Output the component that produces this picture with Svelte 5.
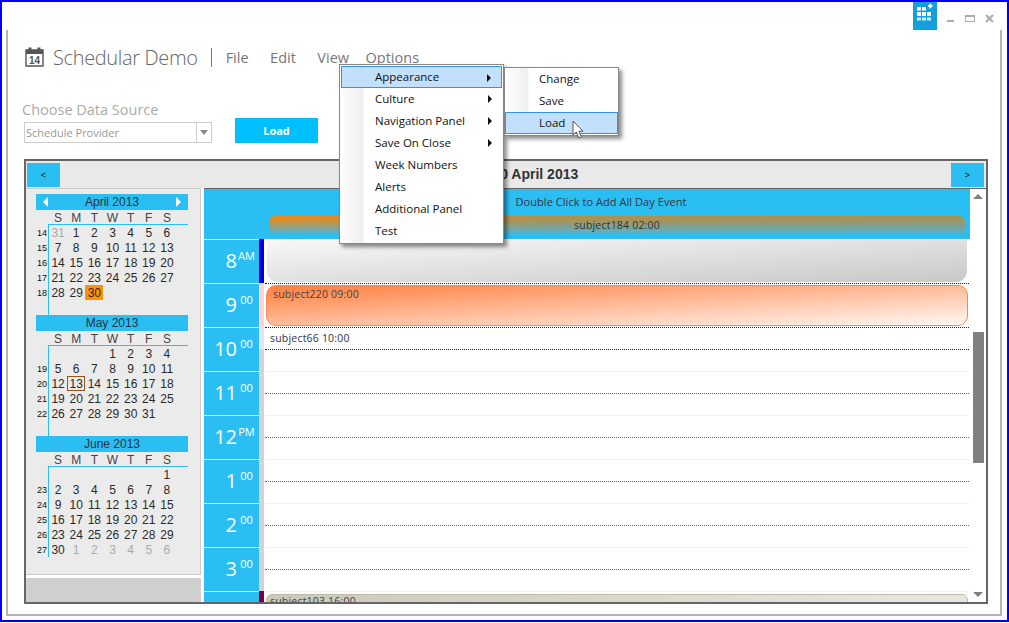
<script>
  const dayNames = ["S", "M", "T", "W", "T", "F", "S"];

  // one calendar month: leading blanks or muted days, then the month, then muted days
  function buildWeeks(lead, total, trail, firstWeek) {
    const cells = [...lead.map((d) => ({ d, muted: d !== "" })), ...Array.from({ length: total }, (_, i) => ({ d: i + 1, muted: false }))];
    for (let i = 1; i <= trail; i++) cells.push({ d: i, muted: true });
    const weeks = [];
    let week = firstWeek;
    for (let i = 0; i < 42; i += 7) {
      const days = cells.slice(i, i + 7);
      const full = days.length > 0 && days[0].d !== "";
      weeks.push({ num: full ? week++ : "", days });
    }
    return weeks;
  }

  const months = [
    { title: "April 2013", nav: true, weeks: buildWeeks([31], 30, 0, 14) },
    { title: "May 2013", nav: false, weeks: buildWeeks(["", "", ""], 31, 0, 19) },
    { title: "June 2013", nav: false, weeks: buildWeeks(["", "", "", "", "", ""], 30, 6, 23) },
  ];

  const hours = [
    { h: "8", s: "AM" },
    { h: "9", s: "00" },
    { h: "10", s: "00" },
    { h: "11", s: "00" },
    { h: "12", s: "PM" },
    { h: "1", s: "00" },
    { h: "2", s: "00" },
    { h: "3", s: "00" },
    { h: "", s: "" },
  ];

  const menuItems = [
    { label: "Appearance", sub: true, active: true },
    { label: "Culture", sub: true },
    { label: "Navigation Panel", sub: true },
    { label: "Save On Close", sub: true },
    { label: "Week Numbers" },
    { label: "Alerts" },
    { label: "Additional Panel" },
    { label: "Test" },
  ];
  const subItems = [{ label: "Change" }, { label: "Save" }, { label: "Load", active: true }];
</script>

<div class="window">
  <div class="caption">
    <div class="tile">
      <svg width="24" height="28" viewBox="0 0 24 28">
        <g fill="#fff">
          <rect x="4" y="5" width="4" height="3.5" /><rect x="9" y="5" width="4" height="3.5" />
          <rect x="4" y="10" width="4" height="4" /><rect x="9" y="10" width="4" height="4" /><rect x="14" y="10" width="4" height="4" />
          <rect x="4" y="15.5" width="4" height="3" opacity="0.8" /><rect x="9" y="15.5" width="4" height="3" opacity="0.8" /><rect x="14" y="15.5" width="4" height="3" opacity="0.8" />
          <path d="M15 3h1.5V1l3.5 3-3.500 3V5H15z" />
        </g>
      </svg>
    </div>
    <div class="min"></div>
    <div class="max"></div>
    <svg class="close" width="9" height="9" viewBox="0 0 9 9"><path d="M1 1l7 7M8 1l-7 7" stroke="#aaa" stroke-width="2" /></svg>
  </div>

  <div class="frame">
    <div class="topbar">
      <svg class="cal-icon" width="19" height="20" viewBox="0 0 19 20">
        <path d="M1 3h17v16H1z" fill="#fff" stroke="#555" stroke-width="1.4" />
        <rect x="1" y="3" width="17" height="4" fill="#555" />
        <rect x="3.500" y="0.5" width="3" height="4.500" fill="#555" />
        <rect x="12.500" y="0.5" width="3" height="4.500" fill="#555" />
        <text x="9.500" y="17" text-anchor="middle" class="cal-num">14</text>
      </svg>
      <span class="title">Schedular Demo</span>
      <span class="sep"></span>
      <nav class="menu">
        <span>File</span>
        <span>Edit</span>
        <span>View</span>
        <span class="options">Options</span>
      </nav>
    </div>

    <div class="source">
      <div>
        <div class="source-label">Choose Data Source</div>
        <div class="combo">
          <span class="combo-text">Schedule Provider</span>
          <span class="combo-btn"><i></i></span>
        </div>
      </div>
      <button class="load">Load</button>
    </div>

    <div class="scheduler">
      <div class="sch-head">
        <button class="nav">&lt;</button>
        <strong>Tuesday 30 April 2013</strong>
        <button class="nav">&gt;</button>
      </div>
      <div class="sch-body">
        <aside class="side">
          <div class="cals">
            {#each months as m}
              <section class="cal">
                <div class="cal-title">
                  {#if m.nav}<i class="tri-l"></i>{/if}
                  <span>{m.title}</span>
                  {#if m.nav}<i class="tri-r"></i>{/if}
                </div>
                <div class="cal-names">
                  {#each dayNames as n}<span>{n}</span>{/each}
                </div>
                <div class="cal-grid">
                  {#each m.weeks as w}
                    <div class="cal-row">
                      <span class="wk">{w.num}</span>
                      <div class="cal-days">
                        {#each w.days as c}
                          <span
                            class="day"
                            class:muted={c.muted}
                            class:sel={m.title === "April 2013" && c.d === 30}
                            class:today={m.title === "May 2013" && c.d === 13}>{c.d}</span>
                        {/each}
                      </div>
                    </div>
                  {/each}
                </div>
              </section>
            {/each}
          </div>
          <div class="side-foot"></div>
        </aside>

        <div class="main">
          <div class="content">
            <div class="allday">
              <div class="allday-hint">Double Click to Add All Day Event</div>
              <div class="allday-ev">subject184 02:00</div>
            </div>
            <div class="grid">
              <div class="times">
                {#each hours as t}
                  <div class="time"><span class="big">{t.h}</span><span class="small">{t.s}</span></div>
                {/each}
              </div>
              <div class="strip">
                <div class="st st-blue"></div>
                <div class="st st-pink"></div>
                <div class="st st-lav"></div>
                <div class="st st-grey"></div>
                <div class="st st-maroon"></div>
              </div>
              <div class="day-col">
                <div class="hour dark">
                  <div class="ev ev-grey"></div>
                </div>
                <div class="hour dark">
                  <div class="ev ev-orange">subject220 09:00</div>
                </div>
                <div class="hour">
                  <div class="half dark">subject66 10:00</div>
                  <div class="half2"></div>
                </div>
                {#each [11, 12, 1, 2, 3] as h (h)}
                  <div class="hour">
                    <div class="half"></div>
                    <div class="half2"></div>
                  </div>
                {/each}
                <div class="hour">
                  <div class="ev ev-olive">subject103 16:00</div>
                </div>
              </div>
            </div>
          </div>
          <div class="scroll">
            <i class="up"></i>
            <div class="thumb"></div>
            <i class="down"></i>
          </div>
        </div>
      </div>
    </div>
  </div>

  <div class="popup">
    {#each menuItems as it}
      <div class="mi" class:active={it.active}>
        <span>{it.label}</span>
        {#if it.sub}<i class="arrow"></i>{/if}
      </div>
    {/each}
  </div>
  <div class="popup sub">
    {#each subItems as it}
      <div class="mi" class:active={it.active}><span>{it.label}</span></div>
    {/each}
  </div>
  <svg class="cursor" width="13" height="20" viewBox="0 0 13 20">
    <path d="M1 1v14l3.400-3 2.400 6 2.600-1.100-2.500-5.700H11z" fill="#fff" stroke="#555" stroke-width="1" />
  </svg>
</div>

<style>
  :global(body) {
    margin: 0;
    background: #fff;
    overflow: hidden;
  }
  .window {
    box-sizing: border-box;
    position: relative;
    width: 1009px;
    height: 622px;
    border: 2px solid #0000f0;
    background: #fff;
    font-family: "Open Sans", "Liberation Sans", sans-serif;
    overflow: hidden;
  }

  .caption {
    display: flex;
    align-items: flex-start;
    height: 28px;
    padding-left: 911px;
  }
  .tile {
    width: 24px;
    height: 28px;
    background: #12a0dc;
  }
  .min {
    width: 7px;
    height: 2px;
    background: #aaa;
    margin: 18px 0 0 10px;
  }
  .max {
    box-sizing: border-box;
    width: 10px;
    height: 7px;
    border: 1px solid #aaa;
    border-top-width: 2px;
    margin: 13px 0 0 11px;
  }
  .close {
    margin: 12px 0 0 10px;
  }

  .frame {
    box-sizing: border-box;
    width: 996px;
    height: 586px;
    margin-left: 4px;
    border: solid #b4b4b4;
    border-width: 0 2px 2px 2px;
  }
  .topbar {
    display: flex;
    align-items: center;
    height: 26px;
    padding: 14px 0 0 17px;
  }
  .cal-icon {
    flex: none;
  }
  .cal-num {
    font: bold 10px "Liberation Sans", sans-serif;
    fill: #555;
  }
  .title {
    font-size: 20px;
    font-weight: 300;
    letter-spacing: -0.35px;
    color: #666;
    margin-left: 9px;
    white-space: nowrap;
  }
  .sep {
    width: 1px;
    height: 19px;
    background: #777;
    margin-left: 13px;
  }
  .menu {
    display: flex;
    gap: 21.500px;
    margin-left: 14px;
    font-size: 14.500px;
    color: #777;
  }
  .options {
    margin-left: -5px;
  }

  .source {
    display: flex;
    align-items: flex-end;
    gap: 23px;
    margin: 30px 0 0 14px;
  }
  .source-label {
    font-size: 14.500px;
    line-height: 20px;
    color: #aaa;
    white-space: nowrap;
  }
  .combo {
    box-sizing: border-box;
    display: flex;
    justify-content: space-between;
    align-items: stretch;
    width: 188px;
    height: 21px;
    margin: 2px 0 0 2px;
    border: 1px solid #ccc;
  }
  .combo-text {
    padding-left: 1px;
    font-size: 11px;
    line-height: 19px;
    color: #999;
  }
  .combo-btn {
    display: flex;
    align-items: center;
    justify-content: center;
    width: 14px;
    border-left: 1px solid #ccc;
  }
  .combo-btn i {
    border: 4px solid transparent;
    border-top: 5px solid #888;
    border-bottom: 0;
  }
  .load {
    width: 83px;
    height: 25px;
    border: 0;
    padding: 0;
    background: #00bfff;
    color: #fff;
    font: bold 11px "Open Sans", sans-serif;
  }

  .scheduler {
    box-sizing: border-box;
    width: 964px;
    height: 445px;
    margin: 16px 0 0 16px;
    border: 2px solid #666;
    overflow: hidden;
  }
  .sch-head {
    display: flex;
    align-items: center;
    justify-content: space-between;
    height: 27px;
    padding: 0 2px 0 1px;
    background: #e9e9e9;
  }
  .sch-head strong {
    font: bold 14px "Liberation Sans", sans-serif;
    color: #333;
    margin-bottom: 2px;
  }
  .nav {
    width: 33px;
    height: 24px;
    border: 0;
    padding: 0;
    background: #2bbef2;
    color: #111;
    font: 9px "Liberation Sans", sans-serif;
  }
  .sch-body {
    display: flex;
    height: 414px;
    gap: 3px;
  }

  .side {
    display: flex;
    flex-direction: column;
    gap: 3px;
    width: 176px;
    margin-left: -1px;
    flex: none;
  }
  .cals {
    box-sizing: border-box;
    height: 387px;
    padding: 5px 0 0 10px;
    background: #ebebeb;
    border: 1px solid #ccc;
  }
  .side-foot {
    flex: 1;
    background: #cfcfcf;
  }
  .cal {
    width: 152px;
    height: 121px;
    display: flex;
    flex-direction: column;
    color: #2a2a2a;
    font: 12px "Liberation Sans", sans-serif;
  }
  .cal-title {
    display: flex;
    align-items: center;
    justify-content: center;
    position: relative;
    flex: none;
    height: 16px;
    background: #2bbef2;
    color: #234;
  }
  .tri-l,
  .tri-r {
    position: absolute;
    top: 3px;
    border: 5px solid transparent;
  }
  .tri-l {
    left: 7px;
    border-left: 0;
    border-right: 5px solid #fff;
  }
  .tri-r {
    right: 7px;
    border-right: 0;
    border-left: 5px solid #fff;
  }
  .cal-names {
    display: grid;
    grid-template-columns: repeat(7, 18.150px);
    flex: none;
    height: 14px;
    line-height: 16px;
    padding-left: 13px;
    text-align: center;
    color: #444;
  }
  .cal-grid {
    margin-left: 12px;
    flex: 1;
    border-left: 1px solid #2bbef2;
    border-top: 1px solid #2bbef2;
  }
  .cal-row {
    display: flex;
    height: 15px;
    line-height: 16px;
    margin-left: -13px;
  }
  .wk {
    width: 13px;
    flex: none;
    text-align: center;
    font-size: 9px;
    color: #111;
    padding-right: 1px;
    box-sizing: border-box;
  }
  .cal-days {
    display: grid;
    grid-template-columns: repeat(7, 18.150px);
    text-align: center;
  }
  .day {
    box-sizing: border-box;
    height: 15px;
  }
  .muted {
    color: #aaa;
  }
  .sel {
    background: #ff9000;
  }
  .today {
    border: 1px solid #a0501a;
    line-height: 14px;
  }

  .main {
    display: flex;
    flex: 1;
    min-width: 0;
    border-top: 1px solid #666;
  }
  .content {
    width: 766px;
    flex: none;
  }
  .allday {
    box-sizing: border-box;
    height: 50px;
    background: #2bbef2;
    padding-left: 65px;
  }
  .allday-hint {
    height: 27px;
    line-height: 26px;
    text-align: center;
    padding-right: 37px;
    font-size: 11px;
    letter-spacing: 0.05px;
    color: #334;
  }
  .allday-ev {
    width: 696px;
    height: 17px;
    line-height: 18px;
    border-radius: 6px 6px 0 0;
    text-align: center;
    font-size: 10.500px;
    letter-spacing: 0.2px;
    color: #333;
    background: linear-gradient(to bottom, rgba(85, 178, 204, 0) 20%, #55b2cc),
      linear-gradient(to right, #e88a1e, #b09050 40%, #a0935a);
  }
  .grid {
    display: flex;
    height: 364px;
    overflow: hidden;
  }
  .times {
    width: 55px;
    flex: none;
    background: #2bbef2;
    color: #fff;
  }
  .time {
    box-sizing: border-box;
    display: flex;
    justify-content: flex-end;
    align-items: flex-start;
    height: 44px;
    padding-right: 4px;
    border-top: 1px solid #e6f7fd;
  }
  .big {
    font-size: 20px;
    line-height: 42px;
  }
  .small {
    min-width: 17px;
    margin-left: 1px;
    text-align: center;
    font-size: 11px;
    line-height: 32px;
  }
  .strip {
    display: flex;
    flex-direction: column;
    width: 5px;
    flex: none;
  }
  .st {
    flex: none;
  }
  .st-blue {
    height: 44px;
    background: #0000e0;
  }
  .st-pink {
    height: 44px;
    background: #ffd3d3;
  }
  .st-lav {
    height: 22px;
    background: #dfe4f8;
  }
  .st-grey {
    height: 242px;
    background: #d3d3d3;
  }
  .st-maroon {
    height: 13px;
    background: #7a0040;
  }
  .day-col {
    flex: 1;
    min-width: 0;
    border-top: 1px solid #f4f4f4;
    margin-left: 1px;
    padding-right: 1px;
  }
  .hour {
    box-sizing: border-box;
    display: flow-root;
    height: 44px;
  }
  .hour.dark {
    border-bottom: 1px dotted #222;
  }
  .half {
    box-sizing: border-box;
    height: 22px;
    border-bottom: 1px dotted #666;
  }
  .half.dark {
    border-bottom-color: #222;
    padding-left: 5px;
    font-size: 10.500px;
    letter-spacing: 0.2px;
    line-height: 20px;
    color: #334;
  }
  .half2 {
    box-sizing: border-box;
    height: 22px;
    border-bottom: 1px solid #f2f2f2;
  }
  .ev {
    box-sizing: border-box;
    margin: 0 1px;
    font-size: 10.500px;
    letter-spacing: 0.2px;
    line-height: 16px;
    padding-left: 6px;
    color: #444;
  }
  .ev-grey {
    height: 43px;
    background: #ccc linear-gradient(to bottom right, #f8f8f8, #c8c8c8);
    border: 1px solid #fff;
    border-top: 0;
    border-radius: 0 0 12px 12px;
  }
  .ev-orange {
    height: 41px;
    margin-top: 1px;
    background: linear-gradient(to bottom right, #ff8040, #fff8f4);
    border: 1px solid #f58a55;
    border-radius: 10px;
  }
  .ev-olive {
    height: 30px;
    margin-top: 2px;
    padding-left: 3px;
    line-height: 12px;
    background: linear-gradient(to right, #cbc9bb, #e8e8df);
    border: 1px solid #bdbcab;
    border-radius: 6px 6px 0 0;
  }

  .scroll {
    display: flex;
    flex-direction: column;
    align-items: center;
    flex: 1;
    background: #fff;
    padding-top: 5px;
  }
  .up {
    border: 5px solid transparent;
    border-bottom: 5px solid #808080;
    border-top: 0;
  }
  .down {
    margin-top: 129px;
    border: 5px solid transparent;
    border-top: 5px solid #808080;
    border-bottom: 0;
  }
  .thumb {
    width: 11px;
    height: 131px;
    margin-top: 133px;
    background: #808080;
  }

  .popup {
    position: absolute;
    left: 337px;
    top: 62px;
    box-sizing: border-box;
    width: 165px;
    height: 180px;
    padding: 1px;
    border: 1px solid #888;
    background: linear-gradient(to right, #fff 0, #eee 23px, #fff 24px);
    box-shadow: 3px 3px 4px rgba(0, 0, 0, 0.45);
    font-size: 11.500px;
    color: #111;
  }
  .popup.sub {
    left: 502px;
    top: 65px;
    width: 115px;
    height: 69px;
    padding: 0;
    background: linear-gradient(to right, #fff 0, #f0f0f0 23px, #fff 24px);
  }
  .mi {
    box-sizing: border-box;
    position: relative;
    height: 22px;
    line-height: 21px;
    padding-left: 34px;
    white-space: nowrap;
  }
  .mi.active {
    background: #c2dffc;
    border: 1px solid #3a8fe8;
    line-height: 19px;
    padding-left: 33px;
  }
  .arrow {
    position: absolute;
    right: 10px;
    top: 7px;
    border: 4px solid transparent;
    border-right: 0;
    border-left: 4px solid #111;
  }
  .cursor {
    position: absolute;
    left: 570px;
    top: 118px;
  }
</style>
